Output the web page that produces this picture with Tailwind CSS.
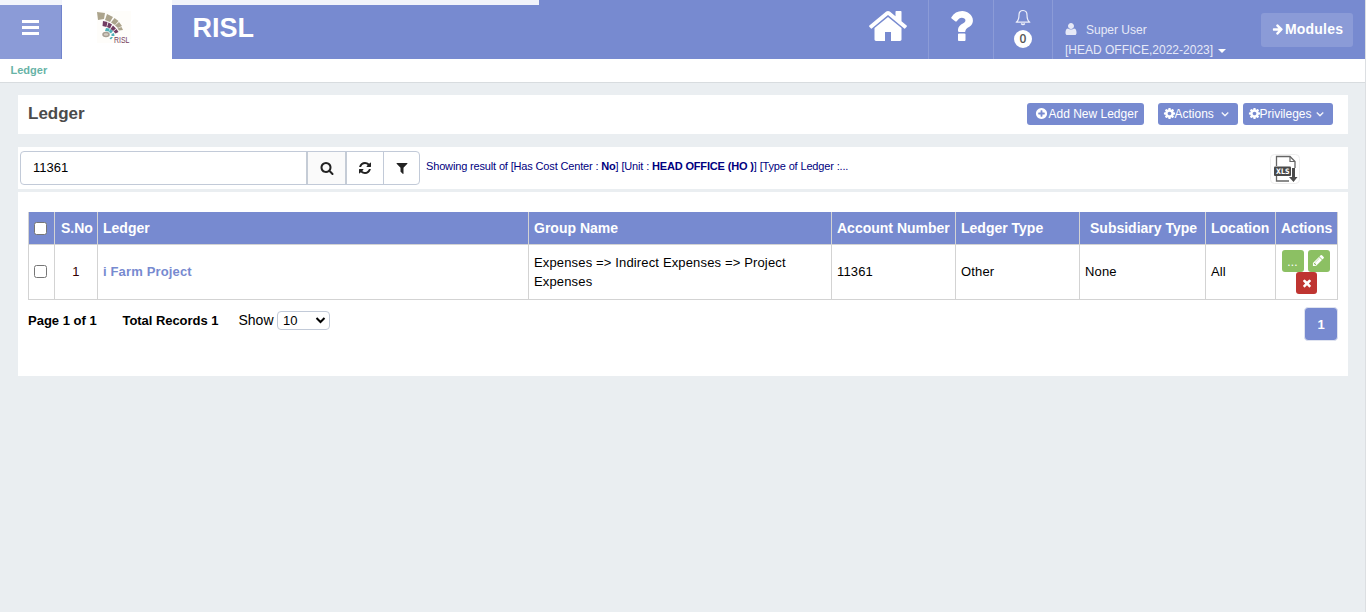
<!DOCTYPE html>
<html lang="en">
<head>
<meta charset="utf-8">
<title>Ledger</title>
<script src="https://cdn.jsdelivr.net/npm/@tailwindcss/browser@4"></script>
</head>
<body class="h-[612px] overflow-hidden bg-[#eaeef1] text-black" style="font-family:'Liberation Sans',Arial,sans-serif">
<svg class="hidden">
  <symbol id="cog" viewBox="0 0 1792 1792"><path d="M1152 896q0-106-75-181t-181-75-181 75-75 181 75 181 181 75 181-75 75-181zm512-109v222q0 12-8 23t-20 13l-185 28q-19 54-39 91 35 50 107 138 10 12 10 25t-9 23q-27 37-99 108t-94 71q-12 0-26-9l-138-108q-44 23-91 38-16 136-29 186-7 28-36 28h-222q-14 0-24.5-8.5t-11.5-21.5l-28-184q-49-16-90-37l-141 107q-10 9-25 9-14 0-25-11-126-114-165-168-7-10-7-23 0-12 8-23 15-21 51-66.5t54-70.5q-27-50-41-99l-183-27q-13-2-21-12.5t-8-23.5v-222q0-12 8-23t19-13l186-28q14-46 39-92-40-57-107-138-10-12-10-24 0-10 9-23 26-36 98.5-107.5t94.5-71.5q13 0 26 10l138 107q44-23 91-38 16-136 29-186 7-28 36-28h222q14 0 24.5 8.5t11.5 21.5l28 184q49 16 90 37l142-107q9-9 24-9 13 0 25 10 129 119 165 170 7 8 7 22 0 12-8 23-15 21-51 66.5t-54 70.5q26 50 41 98l183 28q13 2 21 12.5t8 23.5z"/></symbol>
  <symbol id="angle" viewBox="0 0 1792 1792"><path d="M1395 736q0 13-10 23l-466 466q-10 10-23 10t-23-10l-466-466q-10-10-10-23t10-23l50-50q10-10 23-10t23 10l393 393 393-393q10-10 23-10t23 10l50 50q10 10 10 23z"/></symbol>
</svg>
<div class="relative h-full w-full border-r border-[#dcdfe2]">
  <div class="absolute left-0 top-0 z-10 h-[5px] w-[539px] bg-white/90"></div>

  <header class="flex h-[59px] bg-[#778ad0]">
    <div class="flex w-[62px] border-r border-[#7083cc] bg-[#8b9bd7] pl-[22px] pt-[20px]">
      <div class="flex w-[17px] flex-col gap-[3px]"><i class="h-[3px] bg-white"></i><i class="h-[3px] bg-white"></i><i class="h-[3px] bg-white"></i></div>
    </div>
    <div class="w-[110px] bg-white pl-[27px] pt-[10px]">
      <svg width="60" height="36" viewBox="0 0 60 36">
        <rect x="8" y="1" width="34" height="32" fill="#fefdfa"/>
        <g fill="#aca48c">
          <path d="M8 2l8 1-1 6-6 1z"/><path d="M18 4l6 3-3 5-5-2z"/><path d="M25.500 8l4 3-3.500 4-4-2.500z"/><path d="M30 12l3 4-4 2-3-2.500z"/><path d="M32.500 17l1.500 3-4 .5-1.500-2z"/>
        </g>
        <g fill="#733d62"><path d="M14 11l4.500 1-1 5-4-1z"/><path d="M19.500 12.500l3.500 2-2 4-3-1.500z"/><path d="M24 15.500l3 3-3 2.500-2.500-2z"/><path d="M27.500 19l2 3-3 1.500-2-2z"/></g>
        <g fill="#4fb0b8"><path d="M17 18l3.500.5-.5 3-4-.5z"/><path d="M21 19l3 2-2 2.500-2-1.500z"/><path d="M22.500 24l2.500-1 .5 3h-3z"/><path d="M22 27h2l-2 2.500-1.500-1z"/></g>
        <ellipse cx="17" cy="24.500" rx="3" ry="2" fill="#d4ccc2" stroke="#a79f93" stroke-width="1.500"/>
        <text x="25" y="32.500" font-size="9" textLength="15.500" lengthAdjust="spacingAndGlyphs" fill="#74405c">RISL</text>
      </svg>
    </div>
    <div class="pl-[20.500px] pt-[12px] text-[27px] font-bold leading-[32px] text-white">RISL</div>
    <div class="ml-auto flex">
      <div class="w-[63px] border-r border-[#8b9bd7] pl-[1px] pt-[5px]">
        <svg width="42" height="42" viewBox="0 0 1792 1792" fill="#fff"><path d="M1472 992v480q0 26-19 45t-45 19h-384v-384h-256v384h-384q-26 0-45-19t-19-45v-480q0-1 .5-3t.5-3l575-474 575 474q1 2 1 6zm223-69l-62 74q-8 9-21 11h-3q-13 0-21-7l-692-577-692 577q-12 8-24 7-13-2-21-11l-62-74q-8-10-7-23.500t11-21.500l719-599q32-26 76-26t76 26l244 204v-195q0-14 9-23t23-9h192q14 0 23 9t9 23v408l219 182q10 8 11 21.500t-7 23.500z"/></svg>
      </div>
      <div class="w-[65px] border-r border-[#8b9bd7] pl-[11px] pt-[5px]">
        <svg width="42" height="42" viewBox="0 0 1792 1792" fill="#fff"><path d="M1088 1256v240q0 16-12 28t-28 12h-240q-16 0-28-12t-12-28v-240q0-16 12-28t28-12h240q16 0 28 12t12 28zm316-600q0 54-15.500 101t-35 76.500-55 59.500-57.500 43.500-61 35.500q-41 23-68.500 65t-27.500 67q0 17-12 32.500t-28 15.500h-240q-15 0-25.500-18.500t-10.500-37.500v-45q0-83 65-156.500t143-108.500q59-27 84-56t25-76q0-42-46.500-74t-107.500-32q-65 0-108 29-35 25-107 115-13 16-31 16-12 0-25-8l-164-125q-13-10-15.500-25t5.500-28q160-266 464-266 80 0 161 31t146 83 106 127.500 41 158.500z"/></svg>
      </div>
      <div class="flex w-[59px] flex-col items-center border-r border-[#8b9bd7] pt-[9px]">
        <svg width="16" height="17" viewBox="0 0 16 17" fill="none" stroke="#eef0fa" stroke-width="1.200"><path d="M8 1.500C5 1.500 4 3.500 4 6c0 4-1 6-2.800 7.200h13.600C13 12 12 10 12 6c0-2.500-1-4.500-4-4.500z" stroke-linejoin="round"/><path d="M6.200 14.500q1.800 2 3.600 0" stroke-width="1.500"/></svg>
        <div class="mt-[4px] h-[18px] w-[18px] rounded-full bg-white text-center text-[12px] font-semibold leading-[18px] text-[#555]" style="font-family:'Open Sans',sans-serif">0</div>
      </div>
      <div class="w-[208px] pl-[12px] pt-[20px] text-[12px] leading-[20px] text-[#e6e9f7]">
        <div class="flex h-[20px] items-center"><svg class="mr-[8.500px] -ml-[1.500px] mb-[2px]" width="14" height="14" viewBox="0 0 1792 1792" fill="currentColor"><path d="M1600 1399q0 109-62.500 187t-150.500 78h-982q-88 0-150.500-78t-62.500-187q0-85 8.500-160.500t31.500-152 58.500-131 94-89 134.500-34.500q131 128 377 128t377-128q76 0 134.500 34.500t94 89 58.500 131 31.500 152 8.500 160.500zm-320-887q0 159-112.500 271.500t-271.500 112.500-271.500-112.500-112.500-271.500 112.500-271.500 271.500-112.500 271.500 112.500 112.500 271.500z"/></svg>Super User</div>
        <div class="flex items-center">[HEAD OFFICE,2022-2023]<svg class="ml-[5px] mt-[2px]" width="8" height="4" viewBox="0 0 8 4" fill="#fff"><path d="M0 0h8l-4 4z"/></svg></div>
      </div>
      <div class="mt-[13px] mr-[12px] flex h-[34px] w-[92px] items-center rounded-[3px] bg-[#8b9bd7] pb-[2px] pl-[11px] text-[14px] font-bold tracking-[0.2px] text-white">
        <svg class="mr-px" width="12" height="12" viewBox="0 0 1792 1792" fill="#fff"><path d="M1600 960q0 54-37 91l-651 651q-39 37-91 37-51 0-90-37l-75-75q-38-38-38-91t38-91l293-293h-704q-52 0-84.500-37.500t-32.500-90.500v-128q0-53 32.500-90.500t84.500-37.500h704l-293-294q-38-36-38-90t38-90l75-75q38-38 90-38 53 0 91 38l651 651q37 35 37 90z"/></svg>Modules</div>
    </div>
  </header>

  <nav class="h-[24px] border-b border-[#d8dcdf] bg-white pl-[10.500px] text-[11px] font-bold leading-[22px] text-[#67b3a6]">Ledger</nav>

  <main class="ml-[18px] mt-[12px] w-[1330px]">
    <div class="flex h-[39px] items-center bg-white pb-[2px] pl-[10px] pr-[15px]">
      <h1 class="mr-auto text-[17px] font-bold leading-[24px] text-[#4b4b4b]">Ledger</h1>
      <button class="flex h-[22px] w-[117px] items-center rounded-[3px] bg-[#778ad0] pl-[8px] text-[12px] text-white"><svg class="mr-[0.500px]" width="13" height="13" viewBox="0 0 1792 1792" fill="#fff"><path d="M1344 960v-128q0-26-19-45t-45-19h-256v-256q0-26-19-45t-45-19h-128q-26 0-45 19t-19 45v256h-256q-26 0-45 19t-19 45v128q0 26 19 45t45 19h256v256q0 26 19 45t45 19h128q26 0 45-19t19-45v-256h256q26 0 45-19t19-45zm320-64q0 209-103 385.500t-279.500 279.500-385.500 103-385.500-103-279.500-279.500-103-385.500 103-385.500 279.500-279.500 385.500-103 385.500 103 279.500 279.500 103 385.500z"/></svg>Add New Ledger</button>
      <button class="ml-[14px] flex h-[22px] w-[80px] items-center rounded-[3px] bg-[#778ad0] pl-[5px] text-[12px] text-white"><svg class="-mr-[1.500px]" width="13" height="13" fill="#fff"><use href="#cog"/></svg>Actions<svg class="ml-[5px]" width="12" height="12" fill="#fff" stroke="#fff" stroke-width="80"><use href="#angle"/></svg></button>
      <button class="ml-[5px] flex h-[22px] w-[90px] items-center rounded-[3px] bg-[#778ad0] pl-[5px] text-[12px] text-white"><svg class="-mr-[1.500px]" width="13" height="13" fill="#fff"><use href="#cog"/></svg>Privileges<svg class="ml-[2px]" width="12" height="12" fill="#fff" stroke="#fff" stroke-width="80"><use href="#angle"/></svg></button>
    </div>

    <div class="mt-[13px] flex h-[42px] bg-white pl-[2px] pt-[4px]">
      <div class="flex h-[34px] w-[400px] overflow-hidden rounded-[4px] border border-[#c2cad8] text-[13px] leading-[32px]">
        <div class="w-[285px] pl-[12px]">11361</div>
        <div class="flex w-[41px] items-center justify-center border-x-2 border-[#c5ccd6] bg-[#fafafa]"><svg width="14" height="14" viewBox="0 0 1792 1792" fill="#222"><path d="M1216 832q0-185-131.500-316.500t-316.500-131.500-316.500 131.500-131.500 316.500 131.500 316.500 316.500 131.500 316.500-131.500 131.500-316.500zm512 832q0 52-38 90t-90 38q-54 0-90-38l-343-342q-179 124-399 124-143 0-273.500-55.500t-225-150-150-225-55.500-273.500 55.500-273.500 150-225 225-150 273.500-55.500 273.500 55.500 225 150 150 225 55.500 273.500q0 220-124 399l343 343q37 37 37 90z"/></svg></div>
        <div class="flex w-[37px] items-center justify-center border-r border-[#c2cad8]"><svg width="14" height="14" viewBox="0 0 1792 1792" fill="#222"><path d="M1639 1056q0 5-1 7-64 268-268 434.500t-478 166.500q-146 0-282.500-55t-243.500-157l-129 129q-19 19-45 19t-45-19-19-45v-448q0-26 19-45t45-19h448q26 0 45 19t19 45-19 45l-137 137q71 66 161 102t187 36q134 0 250-65t186-179q11-17 53-117 8-23 30-23h192q13 0 22.500 9.500t9.500 22.500zm25-800v448q0 26-19 45t-45 19h-448q-26 0-45-19t-19-45 19-45l138-138q-148-137-349-137-134 0-250 65t-186 179q-11 17-53 117-8 23-30 23h-199q-13 0-22.500-9.500t-9.500-22.500v-7q65-268 270-434.500t480-166.500q146 0 284 55.500t245 156.500l130-129q19-19 45-19t45 19 19 45z"/></svg></div>
        <div class="flex w-[35px] items-center justify-center"><svg width="14" height="14" viewBox="0 0 1792 1792" fill="#222"><path d="M1595 295q17 41-14 70l-493 493v742q0 42-39 59-13 5-25 5-27 0-45-19l-256-256q-19-19-19-45v-486l-493-493q-31-29-14-70 17-39 59-39h1280q42 0 59 39z"/></svg></div>
      </div>
      <div class="ml-[6px] text-[11px] leading-[30px] tracking-[-0.155px] text-[#000080]">Showing result of [Has Cost Center : <b>No</b>] [Unit : <b>HEAD OFFICE (HO )</b>] [Type of Ledger :...</div>
      <svg class="ml-auto mr-[48px] mt-[3px]" width="30" height="30" viewBox="0 0 30 30">
        <rect x=".5" y=".5" width="29" height="29" rx="4" fill="#fff" stroke="#eee"/>
        <path d="M6.500 12V2.500h13.500l5 5V14M6.500 22v5H19" fill="none" stroke="#666" stroke-width="1.300"/><path d="M20 2.500v5h5" fill="none" stroke="#666" stroke-width="1.200"/>
        <rect x="4" y="12.500" width="17" height="9.500" rx="1" fill="#4a4a4a"/><text x="6" y="20" font-size="7.500" font-weight="bold" fill="#fff" textLength="13.500" lengthAdjust="spacingAndGlyphs" style="font-family:'DejaVu Sans',sans-serif">XLS</text>
        <path d="M22 14h3v9h2.500L23.500 28 19 23h3z" fill="#4a4a4a"/>
      </svg>
    </div>

    <section class="mt-[3px] h-[184px] bg-white px-[10px] pt-[20px]">
      <table class="w-[1310px] table-fixed border-collapse text-left text-[13px] tracking-[0.15px]">
        <colgroup><col class="w-[26px]"><col class="w-[43px]"><col class="w-[431px]"><col class="w-[303px]"><col class="w-[124px]"><col class="w-[124px]"><col class="w-[126px]"><col class="w-[70px]"><col class="w-[62px]"></colgroup>
        <thead><tr class="h-[32px] bg-[#778ad0] text-[14px] text-white tracking-[0px] *:border-x *:border-b *:border-[#d3d3d3] *:p-0 *:pt-px *:pl-[5px] *:whitespace-nowrap">
          <th><div class="h-[13px] w-[13px] rounded-[2.500px] border border-[#767676] bg-white"></div></th><th><span class="pl-px">S.No</span></th><th>Ledger</th><th>Group Name</th><th>Account Number</th><th>Ledger Type</th><th><span class="pl-[5px]">Subsidiary Type</span></th><th>Location</th><th>Actions</th>
        </tr></thead>
        <tbody><tr class="h-[55px] *:border *:border-[#d3d3d3] *:p-0 *:pl-[5px]">
          <td><div class="h-[13px] w-[13px] rounded-[2.500px] border border-[#767676] bg-white"></div></td>
          <td><div class="pr-[5px] text-center text-[#300]">1</div></td>
          <td class="font-bold text-[#778ad0]">i Farm Project</td>
          <td class="leading-[19px]">Expenses =&gt; Indirect Expenses =&gt; Project<br>Expenses</td>
          <td>11361</td><td>Other</td><td>None</td><td>All</td>
          <td><div class="flex w-[49px] flex-wrap justify-center gap-x-[4px]">
            <div class="h-[22px] w-[22px] rounded-[3px] bg-[#8cc063] text-center text-[12px] leading-[24px] text-white">...</div>
            <div class="flex h-[22px] w-[22px] items-center justify-center rounded-[3px] bg-[#8cc063]"><svg width="13" height="13" viewBox="0 0 1792 1792" fill="#fff"><path d="M491 1536l91-91-235-235-91 91v107h128v128h107zm523-928q0-22-22-22-10 0-17 7l-542 542q-7 7-7 17 0 22 22 22 10 0 17-7l542-542q7-7 7-17zm-54-192l416 416-832 832h-416v-416zm683 96q0 53-37 90l-166 166-416-416 166-165q36-38 90-38 53 0 91 38l235 234q37 39 37 91z"/></svg></div>
            <div class="ml-[2px] flex h-[22px] w-[21px] items-center justify-center rounded-[3px] bg-[#bf3531]"><svg width="12" height="12" viewBox="0 0 1792 1792" fill="#fff"><path d="M1490 1322q0 40-28 68l-136 136q-28 28-68 28t-68-28l-294-294-294 294q-28 28-68 28t-68-28l-136-136q-28-28-28-68t28-68l294-294-294-294q-28-28-28-68t28-68l136-136q28-28 68-28t68 28l294 294 294-294q28-28 68-28t68 28l136 136q28 28 28 68t-28 68l-294 294 294 294q28 28 28 68z"/></svg></div>
          </div></td>
        </tr></tbody>
      </table>
      <div class="mt-[7px] flex text-[13px] leading-[28px]">
        <b class="w-[94.500px]">Page 1 of 1</b><b class="w-[116px] tracking-[-0.050px]">Total Records 1</b><span class="w-[38.500px] text-[14px] leading-[27px]">Show</span>
        <div class="mt-[4px] flex h-[19px] w-[53px] items-center rounded-[4px] border border-[#c2cad8] pl-[5px] text-[13px] leading-[17px]">10<svg class="ml-[18px]" width="11" height="7" viewBox="0 0 11 7" fill="none" stroke="#000" stroke-width="2"><path d="M1.500 1l4 4 4-4"/></svg></div>
        <div class="ml-auto h-[34px] w-[34px] rounded-[4px] border border-[#dfe3f0] bg-[#778ad0] text-center text-[13px] font-bold leading-[33px] text-white">1</div>
      </div>
    </section>
  </main>
</div>
</body>
</html>
